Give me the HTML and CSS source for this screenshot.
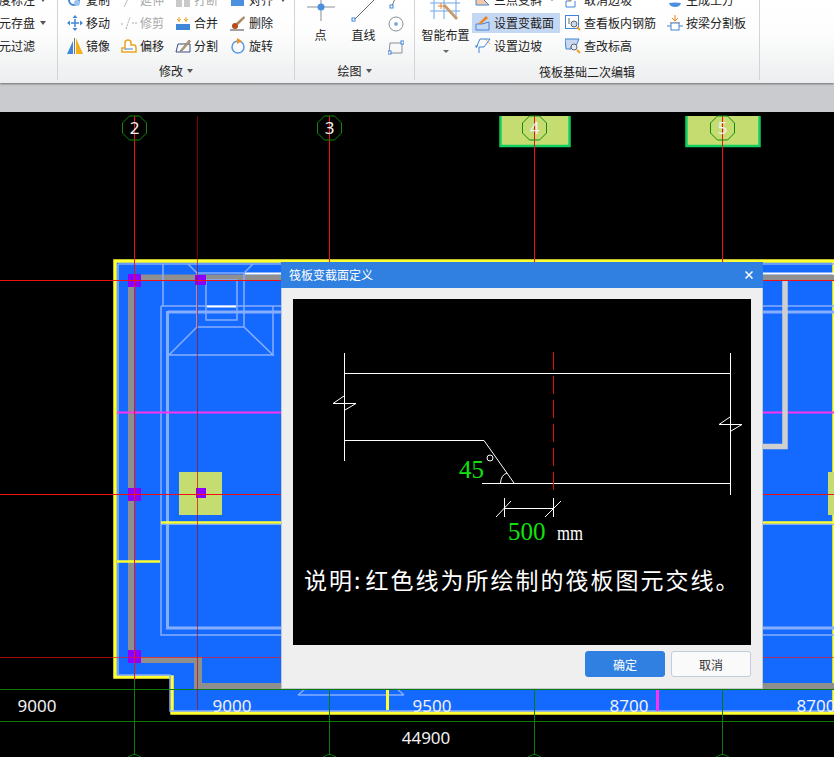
FILE: index.html
```html
<!DOCTYPE html>
<html lang="zh">
<head>
<meta charset="utf-8">
<title>筏板变截面定义</title>
<link rel="stylesheet" href="styles.css">
</head>
<body>
<header class="ribbon">
  <section class="group g1">
    <div class="rows">
      <div class="item clip"><span>度标注</span><i class="caret"></i></div>
      <div class="item clip"><span>元存盘</span><i class="caret"></i></div>
      <div class="item clip"><span>元过滤</span></div>
    </div>
  </section>
  <section class="group g2">
    <div class="rows">
      <div class="item"><svg class="ic" viewBox="0 0 16 16"><circle cx="7" cy="8" r="5" fill="none" stroke="#3f86d8" stroke-width="2"/><circle cx="10" cy="11" r="3" fill="#9cc3ee"/></svg><span>复制</span></div>
      <div class="item"><svg class="ic" viewBox="0 0 16 16"><path d="M3 15 9 3" stroke="#bbb" fill="none"/></svg><span class="off">延伸</span></div>
      <div class="item"><svg class="ic" viewBox="0 0 16 16"><path d="M1 8h6v7H1zM9 8h6v7H9z" fill="#c9c9c9"/></svg><span class="off">打断</span></div>
      <div class="item"><svg class="ic" viewBox="0 0 16 16"><path d="M1 5h13v9H1z" fill="#4a8fe0"/></svg><span>对齐</span><i class="caret"></i></div>

      <div class="item"><svg class="ic" viewBox="0 0 16 16"><path d="M8 4v8M4 8h8" stroke="#3f86d8" stroke-width="1.5"/><path d="M8 0l2.500 3h-5zM8 16l-2.500-3h5zM0 8l3-2.500v5zM16 8l-3 2.500v-5z" fill="#3f86d8"/></svg><span>移动</span></div>
      <div class="item"><svg class="ic" viewBox="0 0 16 16"><path d="M0 9h3M5 14 9 2M11 8h5" stroke="#aaa" fill="none" stroke-dasharray="2 1"/></svg><span class="off">修剪</span></div>
      <div class="item"><svg class="ic" viewBox="0 0 16 16"><path d="M1 9h14v6H1z" fill="#3f86d8"/><path d="M4 2v5M2 4l2 2 2-2M11 2v5M9 4l2 2 2-2" stroke="#e8a020" fill="none"/></svg><span>合并</span></div>
      <div class="item"><svg class="ic" viewBox="0 0 16 16"><path d="M6 8 14 1l1 2-7 7z" fill="#a8885a"/><circle cx="5" cy="11" r="3" fill="#b84a1a"/><path d="M0 15h14" stroke="#444"/></svg><span>删除</span></div>

      <div class="item"><svg class="ic" viewBox="0 0 16 16"><path d="M6 3v13H0z" fill="#3f86d8"/><path d="M9 0v16h7z" fill="#f2b01e"/><path d="M7.500 0v16" stroke="#777"/></svg><span>镜像</span></div>
      <div class="item"><svg class="ic" viewBox="0 0 16 16"><path d="M1 14v-4h3V5q0-3 3-3t3 3v2h3q2 0 2 3v4z" fill="#fff" stroke="#eba51c" stroke-width="1.500"/><path d="M4 12v-1h8" stroke="#3f86d8" fill="none"/></svg><span>偏移</span></div>
      <div class="item"><svg class="ic" viewBox="0 0 16 16"><path d="M1 14 3 6h12v8z" fill="none" stroke="#3a4f80"/><path d="M5 13 14 2l1.500 1.500L7 13z" fill="#c9a070" stroke="#555" stroke-width=".5"/></svg><span>分割</span></div>
      <div class="item"><svg class="ic" viewBox="0 0 16 16"><circle cx="8" cy="9" r="6" fill="none" stroke="#5a9ade" stroke-width="1.500"/><path d="M7 0l5 3-5 3z" fill="#f09020"/></svg><span>旋转</span></div>
    </div>
    <div class="label">修改<i class="caret"></i></div>
  </section>
  <section class="group g3">
    <div class="big">
      <svg class="bigic" viewBox="0 0 36 24"><path d="M18 0v21M4 7h28" stroke="#8a9097"/><circle cx="18" cy="7" r="3.500" fill="#4a8fe0"/></svg>
      <span>点</span>
    </div>
    <div class="big">
      <svg class="bigic" viewBox="0 0 36 24"><path d="M8 20 28 0" stroke="#666"/><rect x="6" y="18" width="3" height="3" fill="#fff" stroke="#3f86d8"/></svg>
      <span>直线</span>
    </div>
    <div class="smalls">
      <svg class="ic" viewBox="0 0 16 16"><path d="M4 13 8 3" stroke="#777"/><rect x="2" y="12" width="3" height="3" fill="#fff" stroke="#3f86d8"/></svg>
      <svg class="ic" viewBox="0 0 16 16"><circle cx="8" cy="8" r="7" fill="none" stroke="#8a9097"/><rect x="7" y="7" width="2" height="2" fill="#fff" stroke="#3f86d8"/></svg>
      <svg class="ic" viewBox="0 0 16 16"><path d="M2 4h12v10H1z" fill="none" stroke="#8a9097"/><rect x="0" y="12" width="3" height="3" fill="#fff" stroke="#3f86d8"/><rect x="13" y="2" width="3" height="3" fill="#fff" stroke="#3f86d8"/></svg>
    </div>
    <div class="label">绘图<i class="caret"></i></div>
  </section>
  <section class="group g4">
    <div class="big wide">
      <svg class="bigic2" viewBox="0 0 32 26"><path d="M4 0v22M14 0v22M26 0v22M0 6h30M0 14h30" stroke="#6ea6e6"/><path d="M13 9 26 23l2-2L15 7z" fill="#c79a6a"/><path d="M8 9h6M11 6v6" stroke="#f08020"/></svg>
      <span>智能布置</span>
      <i class="caret small"></i>
    </div>
    <div class="rows">
      <div class="item"><svg class="ic" viewBox="0 0 16 16"><path d="M1 13V0l13 13z" fill="#f5c9a8" stroke="#3f86d8"/></svg><span>三点变斜</span><i class="caret small"></i></div>
      <div class="item"><svg class="ic" viewBox="0 0 16 16"><path d="M8 2 14 7H6v2H1v6h9V9" fill="none" stroke="#3f86d8"/><path d="M3 9 11 1l1.500 1.500L5 9z" fill="#f08020"/></svg><span>取消边坡</span></div>
      <div class="item"><svg class="ic" viewBox="0 0 16 16"><path d="M2 11q6-1 12 0-1 4-6 4t-6-4z" fill="#4a8fe0"/><path d="M5 8h6L8 2z" fill="#f08020"/></svg><span>生成土方</span></div>

      <div class="item on"><svg class="ic" viewBox="0 0 16 16"><path d="M1 15V9h6l7-2v8z" fill="none" stroke="#3f86d8"/><path d="M3 9 11 1l2 2-7 6z" fill="#f08020"/></svg><span>设置变截面</span></div>
      <div class="item"><svg class="ic" viewBox="0 0 16 16"><rect x=".5" y=".5" width="13" height="13" fill="#fff" stroke="#3f86d8"/><circle cx="9" cy="9" r="3" fill="#c7d8ef" stroke="#666"/><path d="M12 12l3 3" stroke="#f0a020" stroke-width="2"/><path d="M4 3v6" stroke="#666"/></svg><span>查看板内钢筋</span></div>
      <div class="item"><svg class="ic" viewBox="0 0 16 16"><path d="M3 8h10M8 0v5M5 3l3 3 3-3" stroke="#f08020" fill="none"/><rect x="4" y="8" width="8" height="7" fill="#fff" stroke="#3f86d8"/><path d="M0 11h4M12 11h4" stroke="#3f86d8"/></svg><span>按梁分割板</span></div>

      <div class="item"><svg class="ic" viewBox="0 0 16 16"><path d="M1 10 5 1h10L9 9H4v6M0 8h3" fill="none" stroke="#3f86d8"/><path d="M10 1l5 5" stroke="#f08020" stroke-dasharray="1 1"/></svg><span>设置边坡</span></div>
      <div class="item"><svg class="ic" viewBox="0 0 16 16"><path d="M0 1h14L11 8H6v3H1z" fill="#c7d8ef" stroke="#3f86d8"/><circle cx="9" cy="9" r="3" fill="#dfe8f5" stroke="#666"/><path d="M12 12l3 3" stroke="#f0a020" stroke-width="2"/></svg><span>查改标高</span></div>
    </div>
    <div class="label">筏板基础二次编辑</div>
  </section>
</header>
<div class="graybar"></div>
<main class="stage">
  <svg class="cad" viewBox="0 112 834 645" width="834" height="645">
    <path class="slab" d="M115 261H834V713H172V677H115Z"/>
    <path class="lav" d="M118 264H834M118 264V675H170V711H834"/>
    <path class="beam" d="M131 281V660H198M198 686H834"/>
    <path class="beamw" d="M198 657V689"/>
    <path class="beamtop" d="M128 277.500H834"/>
    <path class="white" d="M245 273.500H834"/>

    <path class="lav" d="M163 264V306M161 306H834M161 306V635H834"/>
    <path class="lav2" d="M167.500 311V628H834M168 312H834"/>
    <path class="lav" d="M197 273H244V327H197ZM206 280H237V320H206ZM197 327 169 355H273L244 327M188 264 197 273M253 264 244 273M273 306V355"/>
    <path class="white" d="M207 306.500H236"/>
    <path class="lav" d="M298 695H404M298 695 305 689M404 695 397 689"/>

    <path class="ygrid" d="M161 522.500H834M117 561.500H160"/>
    <path class="lavthin" d="M161 524.500H834"/>
    <path class="yv" d="M387.500 689V710"/>
    <path class="mg" d="M117 412.500H834"/>
    <path class="mgv" d="M657.500 689V711"/>
    <path class="pale" d="M785 281V446.500H763"/>

    <rect class="col" x="179" y="472" width="43" height="43"/>
    <rect class="col" x="828" y="472" width="6" height="43"/>
    <rect class="colg" x="500.500" y="110" width="69" height="36"/>
    <rect class="colg" x="686.500" y="110" width="73" height="36"/>
    <rect class="blackout" x="0" y="112" width="834" height="4"/>

    <rect class="pur" x="128" y="274" width="13" height="13"/>
    <rect class="pur" x="128" y="488" width="13" height="13"/>
    <rect class="pur" x="128" y="650" width="13" height="13"/>
    <rect class="pur" x="195" y="275" width="11" height="10"/>
    <rect class="pur" x="196" y="488" width="10" height="10"/>

    <path class="gline" d="M0 689.500H834M0 721.500H834M134.500 663V755M329.500 689V755M534.500 689V755M722.500 689V755M128 757 134.500 754 141 757M323 757 329.500 754 336 757M528 757 534.500 754 541 757M716 757 722.500 754 729 757"/>
    <path class="rline" d="M134.500 116V680M329.500 116V262M534.500 116V262M722.500 116V262"/>
    <path class="rdark" d="M197.500 116V710"/>
    <path class="rmid" d="M0 657.500H834"/>
    <path class="rline" d="M0 280.500H834M0 494.500H834"/>

    <polygon class="oct" points="129.500,116 139.500,116 146.500,123 146.500,133 139.500,140 129.500,140 122.500,133 122.500,123"/>
    <polygon class="oct" points="324.500,116 334.500,116 341.500,123 341.500,133 334.500,140 324.500,140 317.500,133 317.500,123"/>
    <polygon class="oct" points="529.500,116 539.500,116 546.500,123 546.500,133 539.500,140 529.500,140 522.500,133 522.500,123"/>
    <polygon class="oct" points="717.500,116 727.500,116 734.500,123 734.500,133 727.500,140 717.500,140 710.500,133 710.500,123"/>
    <text class="axis" x="134.500" y="134">2</text>
    <text class="axis" x="329.500" y="134">3</text>
    <text class="axis" x="534.500" y="134">4</text>
    <text class="axis" x="722.500" y="134">5</text>

    <text class="dim" x="37" y="712">9000</text>
    <text class="dim" x="232" y="712">9000</text>
    <text class="dim" x="432" y="712">9500</text>
    <text class="dim" x="629" y="712">8700</text>
    <text class="dim" x="816" y="712">8700</text>
    <text class="dim" x="426" y="744">44900</text>
  </svg>
  <div class="dialog">
    <div class="dtitle"><span>筏板变截面定义</span><svg class="close" viewBox="0 0 8 8"><path d="M.5.500 7.500 7.500M7.500.500 .5 7.500"/></svg></div>
    <div class="dbody">
      <svg class="panel" viewBox="293 299 458 346" width="458" height="346">
        <path class="w" d="M344.500 353V461M730.500 353V495M344 373.500H731M344 440.500H484L514 483M482 483.500H731M504.500 498V517M553.500 498V517M504 508.500H553M496 517 511 501M545 517 561 501"/>
        <path class="w" d="M333 403.500H356M333 403.500 344 396M356 403.500 345 410"/>
        <path class="w" d="M719 424.500H742M719 424.500 730 417M742 424.500 731 431"/>
        <path class="w" d="M500.500 483Q501 475 507 473"/>
        <circle class="w" cx="490" cy="458" r="3"/>
        <path class="red" d="M553.500 352V490"/>
        <text class="gr g45" x="459" y="478">45</text>
        <text class="gr g500" x="508" y="540">500</text>
        <text class="mm" x="557" y="540" textLength="26" lengthAdjust="spacingAndGlyphs">mm</text>
        <text class="note" x="304" y="589">说明:<tspan dx="3">红色线为所绘制的筏板图元交线。</tspan></text>
      </svg>
      <div class="btns">
        <button class="btn primary">确定</button>
        <button class="btn">取消</button>
      </div>
    </div>
  </div>
</main>
</body>
</html>
```
FILE: styles.css
```css
* { box-sizing: border-box; }
html, body { margin: 0; padding: 0; }
body {
  width: 834px;
  height: 757px;
  overflow: hidden;
  background: #000;
  font: 12px/1 "Noto Sans CJK SC", "Noto Sans", sans-serif;
  color: #222;
}
.ribbon {
  display: flex;
  height: 83px;
  overflow: hidden;
  background: linear-gradient(#fff 0%, #fdfdfd 40%, #eceeef 100%);
  position: relative;
  z-index: 1;
  box-shadow: 0 1px 2px #6d6f72;
}
.group {
  display: flex;
  flex-wrap: wrap;
  align-content: flex-start;
  position: relative;
  height: 80px;
  border-right: 1px solid #d2d4d6;
  flex: none;
}
.g1 { width: 58px; }
.g2 { width: 237px; padding-left: 9px; }
.g3 { width: 120px; padding-left: 4px; }
.g4 { width: 345px; padding-left: 4px; }
.rows {
  display: grid;
  grid-template-rows: repeat(3, 23px);
  grid-auto-flow: row;
  margin-top: -12px;
  height: 69px;
}
.g1 .rows { grid-template-columns: 58px; margin-left: -1px; }
.g2 .rows { grid-template-columns: 54px 54px 55px 60px; }
.g4 .rows { grid-template-columns: 90px 102px 90px; }
.item {
  display: flex;
  align-items: center;
  gap: 3px;
  height: 23px;
  white-space: nowrap;
  padding-left: 0;
}
.g4 .item { padding-left: 3px; gap: 3px; }
.item.on { background: #c5d8f3; width: 88px; height: 20px; margin-top: 2px; }
.clip { gap: 1px; }
.off { color: #a8a8a8; }
.ic { width: 16px; height: 16px; flex: none; }
.caret {
  display: inline-block;
  width: 0;
  height: 0;
  border: 3.500px solid transparent;
  border-top: 4px solid #555;
  border-bottom: 0;
  margin-left: 4px;
}
.caret.small { border-width: 3px 3px 0; border-top-color: #666; }
.label {
  position: absolute;
  left: 0;
  right: 0;
  top: 64px;
  height: 14px;
  line-height: 14px;
  display: flex;
  justify-content: center;
  align-items: center;
}
.g4 .label { top: 65px; }
.big {
  width: 43px;
  height: 80px;
  display: flex;
  flex-direction: column;
  align-items: center;
  margin-top: -2px;
}
.big.wide { width: 53px; }
.big span { margin-top: 5px; white-space: nowrap; }
.big .caret { margin: 9px 0 0; }
.bigic { width: 36px; height: 24px; margin-top: 2px; flex: none; }
.bigic2 { width: 32px; height: 26px; margin-top: -1px; flex: none; }
.big.wide span { margin-top: 6px; }
.smalls {
  display: flex;
  flex-direction: column;
  gap: 7px;
  margin-top: -7px;
  padding-left: 3px;
}
.graybar { height: 29px; background: #c9cbce; }
.stage { position: relative; height: 645px; }
.cad { display: block; }
.cad path, .panel path { fill: none; }
.slab { fill: #1469ff !important; stroke: #ffff33; stroke-width: 3.500px; }
.lav { stroke: #86aeff; stroke-width: 1.500px; }
.lav2 { stroke: #86aeff; stroke-width: 3px; }
.lavthin { stroke: #86aeff; stroke-width: 1px; }
.beam { stroke: #8f8f8f; stroke-width: 6px; }
.beamw { stroke: #8f8f8f; stroke-width: 8px; }
.beamtop { stroke: #8f8f8f; stroke-width: 6px; }
.white { stroke: #fff; stroke-width: 2px; }
.ygrid { stroke: #ffff33; stroke-width: 2.500px; }
.yv { stroke: #ffff33; stroke-width: 3px; }
.mg { stroke: #ff33ee; stroke-width: 2px; }
.mgv { stroke: #ff33ee; stroke-width: 3px; }
.pale { stroke: #cfcfcf; stroke-width: 5.500px; }
.col { fill: #c4dc70; }
.colg { fill: #c4dc70; stroke: #12d060; stroke-width: 2.500px; }
.blackout { fill: #000; }
.gline { stroke: #0a7a0a; stroke-width: 1px; }
.rline { stroke: #f21010; stroke-width: 1px; }
.rdark { stroke: #c00000; stroke-width: 1px; stroke-opacity: .65; }
.rmid { stroke: #ff1010; stroke-width: 1px; stroke-opacity: .65; }
.pur { fill: #8c00ff; }
.oct { fill: none; stroke: #0f8a0f; stroke-width: 1px; }
.axis, .dim {
  fill: #f2f2f2;
  text-anchor: middle;
  font-family: "Noto Sans", sans-serif;
}
.axis { font-size: 17px; }
.dim { font-size: 17px; }
.dialog {
  position: absolute;
  left: 281px;
  top: 150px;
  width: 482px;
  height: 427px;
  background: #efefef;
  box-shadow: inset 0 0 0 1px #c4c8d0;
}
.dtitle {
  height: 26px;
  background: #2f80e0;
  color: #fff;
  padding: 0 10px 0 8px;
  display: flex;
  align-items: center;
  justify-content: space-between;
}
.close { width: 8px; height: 8px; }
.close path { stroke: #fff; stroke-width: 1.500px; fill: none; }
.dbody { padding: 11px 12px 12px; }
.panel { display: block; background: #000; }
.w { stroke: #fff; stroke-width: 1px; fill: none; }
.red { stroke: #e01010; stroke-width: 1px; stroke-dasharray: 18 6; }
.gr { fill: #10e010; font-family: "Liberation Serif", serif; }
.g45, .g500 { font-size: 25px; }
.mm { fill: #fff; font: 22px "Liberation Serif", serif; }
.note {
  fill: #fff;
  font-family: "Noto Sans CJK SC", sans-serif;
  font-size: 23px;
  letter-spacing: 2px;
}
.btns {
  display: flex;
  justify-content: flex-end;
  gap: 6px;
  margin-top: 6px;
}
.btn {
  width: 80px;
  height: 26px;
  border: 1px solid #c2cbdc;
  border-radius: 3px;
  background: #fafafa;
  color: #333;
  font: 12px "Noto Sans CJK SC", sans-serif;
  padding: 0;
}
.btn.primary { background: #2f80e0; border-color: #2f80e0; color: #fff; }
```
